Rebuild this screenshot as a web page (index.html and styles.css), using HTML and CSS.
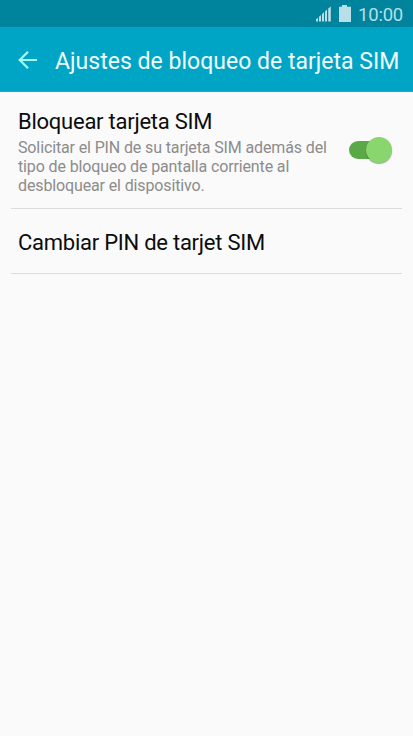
FILE: index.html
```html
<!DOCTYPE html>
<html lang="es">
<head>
<meta charset="utf-8">
<title>Ajustes de bloqueo de tarjeta SIM</title>
<link rel="stylesheet" href="styles.css">
</head>
<body>
<div class="status">
  <svg class="status-icons" width="36" height="18" viewBox="0 0 36 18">
    <path d="M0 16.4V14.2L2 12.8V16.4ZM3 16.4V11.8L5 10V16.4ZM6 16.4V9L8 7.2V16.4ZM9 16.4V6.4L11 4.6V16.4ZM12.2 16.4V3.6L14.8 1.6V16.4Z"/>
    <path d="M23 1.8H26V0H31V1.8H35V17H23Z"/>
  </svg>
  <span class="clock">10:00</span>
</div>
<header class="bar">
  <svg class="back" width="20" height="20" viewBox="0 0 20 20">
    <path d="M10 1.7 1.7 10 10 18.3M2 10H19"/>
  </svg>
  <h1 class="title">Ajustes de bloqueo de tarjeta SIM</h1>
</header>
<main class="list">
  <section class="row row-lock">
    <div class="text">
      <h2 class="label">Bloquear tarjeta SIM</h2>
      <p class="desc">Solicitar el PIN de su tarjeta SIM además del<br>tipo de bloqueo de pantalla corriente al<br>desbloquear el dispositivo.</p>
    </div>
    <div class="switch"><span class="thumb"></span></div>
  </section>
  <section class="row row-pin">
    <h2 class="label">Cambiar PIN de tarjet SIM</h2>
  </section>
</main>
</body>
</html>
```
FILE: styles.css
```css
* { box-sizing: border-box; margin: 0; padding: 0; }
body {
  width: 413px;
  height: 736px;
  overflow: hidden;
  background: #fafafa;
  font-family: Roboto, sans-serif;
}
.status {
  display: flex;
  justify-content: flex-end;
  height: 27px;
  padding: 5px 9px 0 0;
  background: #00839d;
}
.status-icons { fill: #b8dfe7; margin-right: 6px; }
.clock {
  width: 46px;
  font-size: 18.5px;
  line-height: 21px;
  letter-spacing: -0.2px;
  color: #b8dfe7;
  white-space: nowrap;
}
.bar {
  display: flex;
  align-items: flex-start;
  height: 65px;
  padding: 23px 0 0 18px;
  background: #00a5c6;
  border-bottom: 1px solid #24a9c4;
}
.back {
  fill: none;
  stroke: #a5fbf2;
  stroke-width: 2.2;
  flex: none;
  margin-right: 17px;
}
.title {
  font-size: 23px;
  font-weight: 400;
  line-height: 26px;
  margin-top: -1px;
  letter-spacing: 0.02px;
  color: #f2fbfc;
  white-space: nowrap;
}
.row {
  display: flex;
  margin: 0 11px;
  padding: 0 7px;
  border-bottom: 1px solid #dcdcdc;
}
.row-lock { height: 117px; padding-top: 17px; }
.row-pin { height: 65px; padding-top: 21px; }
.text { width: 331px; flex: none; }
.label {
  font-size: 22px;
  font-weight: 400;
  line-height: 26px;
  letter-spacing: -0.25px;
  color: #0c0c0c;
  white-space: nowrap;
}
.desc {
  margin-top: 3px;
  font-size: 16px;
  line-height: 19px;
  letter-spacing: -0.13px;
  color: #8c8c8c;
  white-space: nowrap;
}
.switch {
  display: flex;
  align-items: center;
  justify-content: flex-end;
  flex: none;
  width: 40px;
  height: 18px;
  margin-top: 32px;
  border-radius: 9px;
  background: #5aa846;
}
.thumb {
  flex: none;
  width: 26px;
  height: 26px;
  margin-right: -3px;
  border-radius: 50%;
  background: #8ad66e;
  box-shadow: 0 1px 1px rgba(0, 0, 0, .35);
}
```
